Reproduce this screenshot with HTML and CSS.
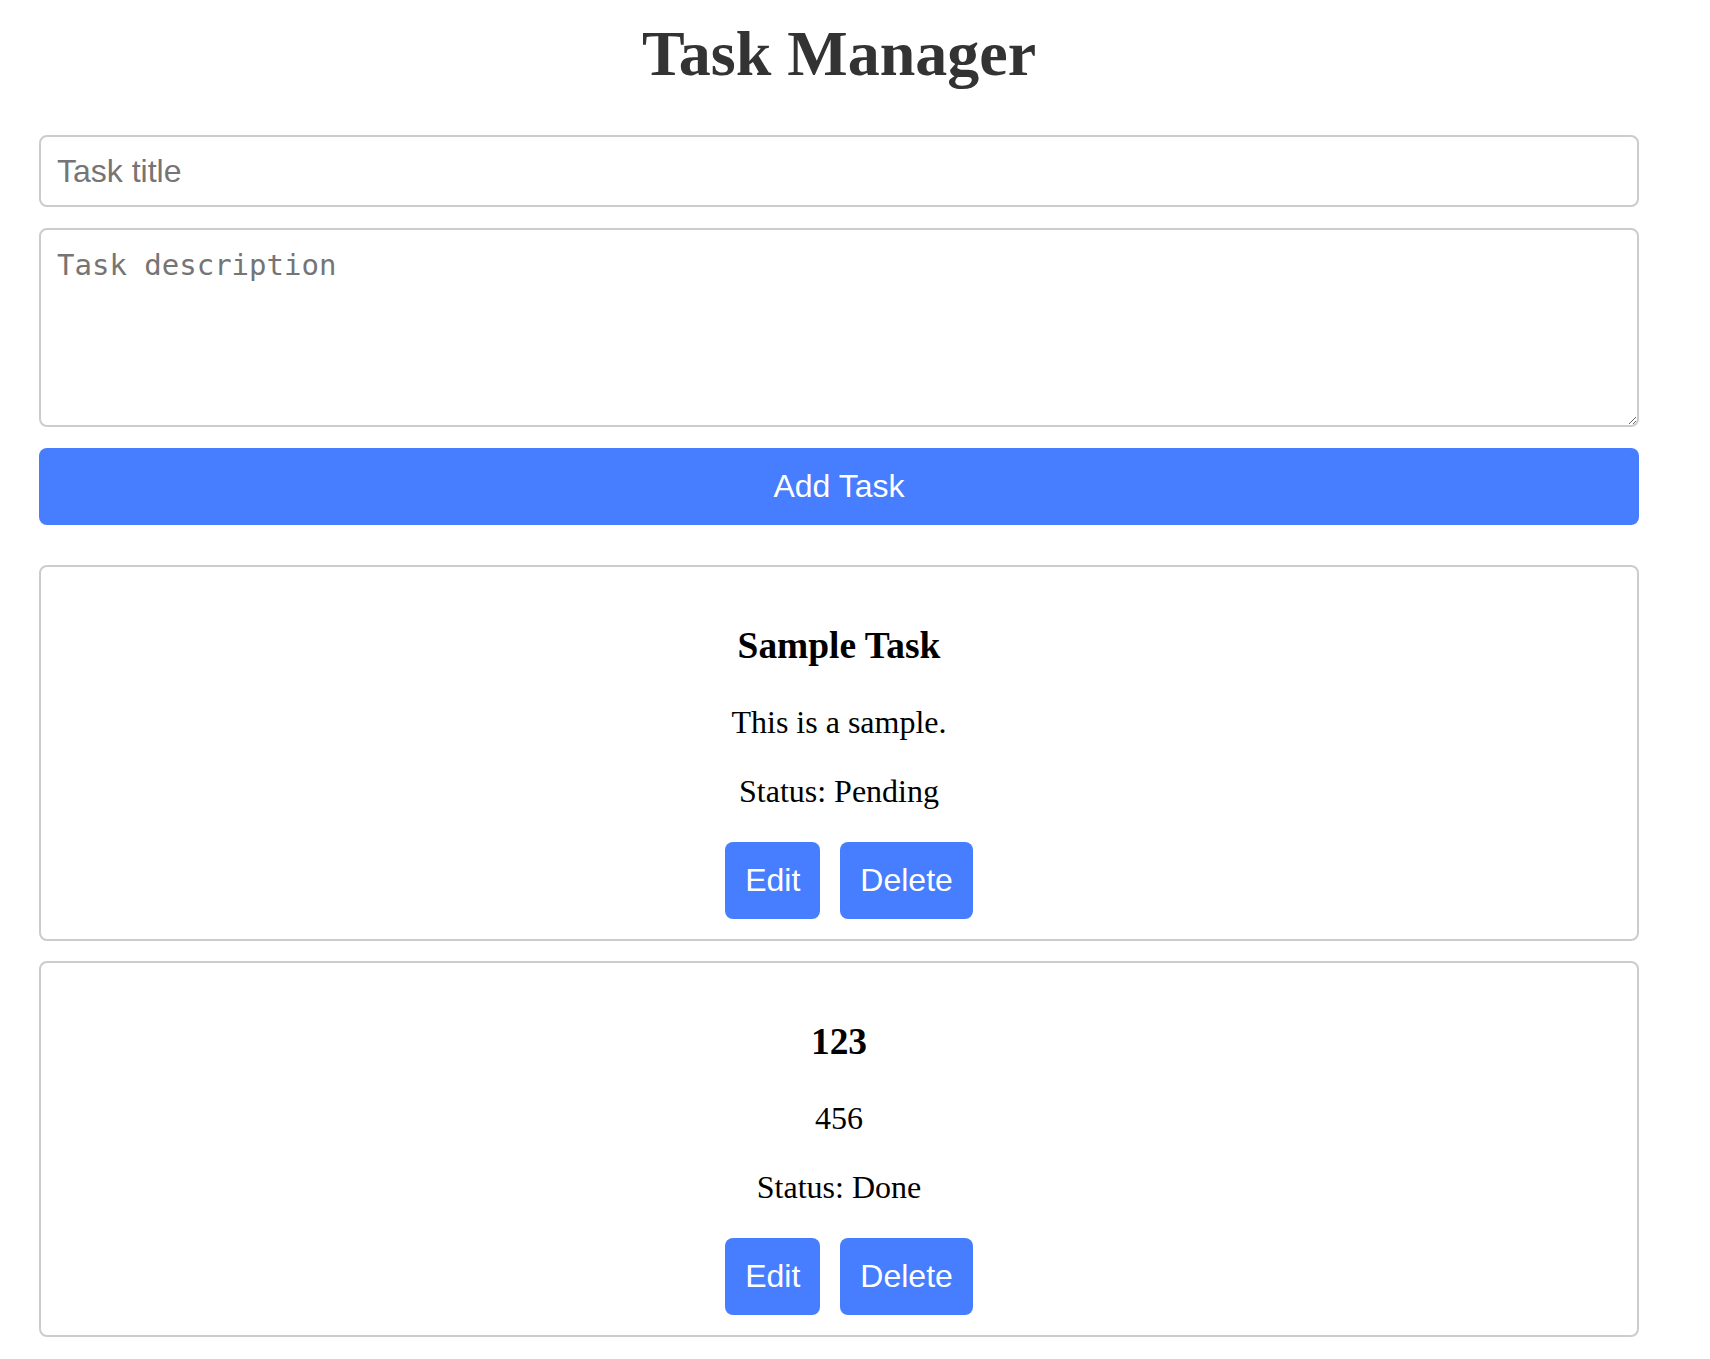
FILE: index.html
```html
<!DOCTYPE html>
<html lang="en">
<head>
<meta charset="utf-8">
<title>Task Manager</title>
<link rel="stylesheet" href="styles.css">
</head>
<body>
<div class="app">
  <h1 class="app-title">Task Manager</h1>
  <form class="task-form">
    <input class="field field-title" type="text" placeholder="Task title">
    <textarea class="field field-desc" placeholder="Task description"></textarea>
    <button class="btn btn-add" type="button">Add Task</button>
  </form>
  <div class="task-list">
    <div class="task-card">
      <h3 class="task-name">Sample Task</h3>
      <p class="task-text">This is a sample.</p>
      <p class="task-text">Status: Pending</p>
      <div class="task-actions">
        <button class="btn btn-small" type="button">Edit</button>
        <button class="btn btn-small" type="button">Delete</button>
      </div>
    </div>
    <div class="task-card">
      <h3 class="task-name">123</h3>
      <p class="task-text">456</p>
      <p class="task-text">Status: Done</p>
      <div class="task-actions">
        <button class="btn btn-small" type="button">Edit</button>
        <button class="btn btn-small" type="button">Delete</button>
      </div>
    </div>
  </div>
</div>
</body>
</html>
```

FILE: styles.css
```css
html, body {
  margin: 0;
  padding: 0;
  background: #ffffff;
}

body {
  font-family: "Liberation Serif", "Times New Roman", serif;
  color: #000000;
}

.app {
  width: 1600px;
  margin: 0 0 0 39px;
  padding-top: 17px;
}

.app-title {
  margin: 0 0 44px;
  font-family: "Liberation Serif", "Times New Roman", serif;
  font-size: 64px;
  line-height: 74px;
  font-weight: bold;
  color: #333333;
  text-align: center;
}

.task-form {
  display: flex;
  flex-direction: column;
  margin: 0 0 40px;
}

.field {
  display: block;
  width: 100%;
  box-sizing: border-box;
  border: 2px solid #cccccc;
  border-radius: 8px;
  padding: 16px;
  background: #ffffff;
  color: #000000;
  outline: none;
}

.field::placeholder {
  color: #757575;
}

.field-title {
  height: 72px;
  margin: 0 0 21px;
  font-family: "Liberation Sans", Arial, sans-serif;
  font-size: 32px;
  line-height: 37px;
}

.field-desc {
  height: 199px;
  margin: 0 0 21px;
  padding-top: 18px;
  font-family: "DejaVu Sans Mono", "Liberation Mono", monospace;
  font-size: 29px;
  resize: vertical;
}

.btn {
  border: none;
  border-radius: 8px;
  background: #477dff;
  color: #ffffff;
  font-family: "Liberation Sans", Arial, sans-serif;
  font-size: 32px;
  line-height: 37px;
  padding: 20px;
  cursor: pointer;
}

.btn-add {
  width: 100%;
  height: 77px;
}

.task-list {
  display: flex;
  flex-direction: column;
  gap: 20px;
}

.task-card {
  border: 2px solid #cccccc;
  border-radius: 8px;
  padding: 20px;
  text-align: center;
}

.task-name {
  margin: 37px 0;
  font-size: 37.44px;
  line-height: 43px;
  font-weight: bold;
}

.task-text {
  margin: 0 0 32px;
  font-size: 32px;
  line-height: 37px;
}

.task-name + .task-text {
  margin-top: 0;
}

.task-actions {
  display: flex;
  justify-content: center;
}

.btn-small {
  height: 77px;
  margin-left: 20px;
}
```
